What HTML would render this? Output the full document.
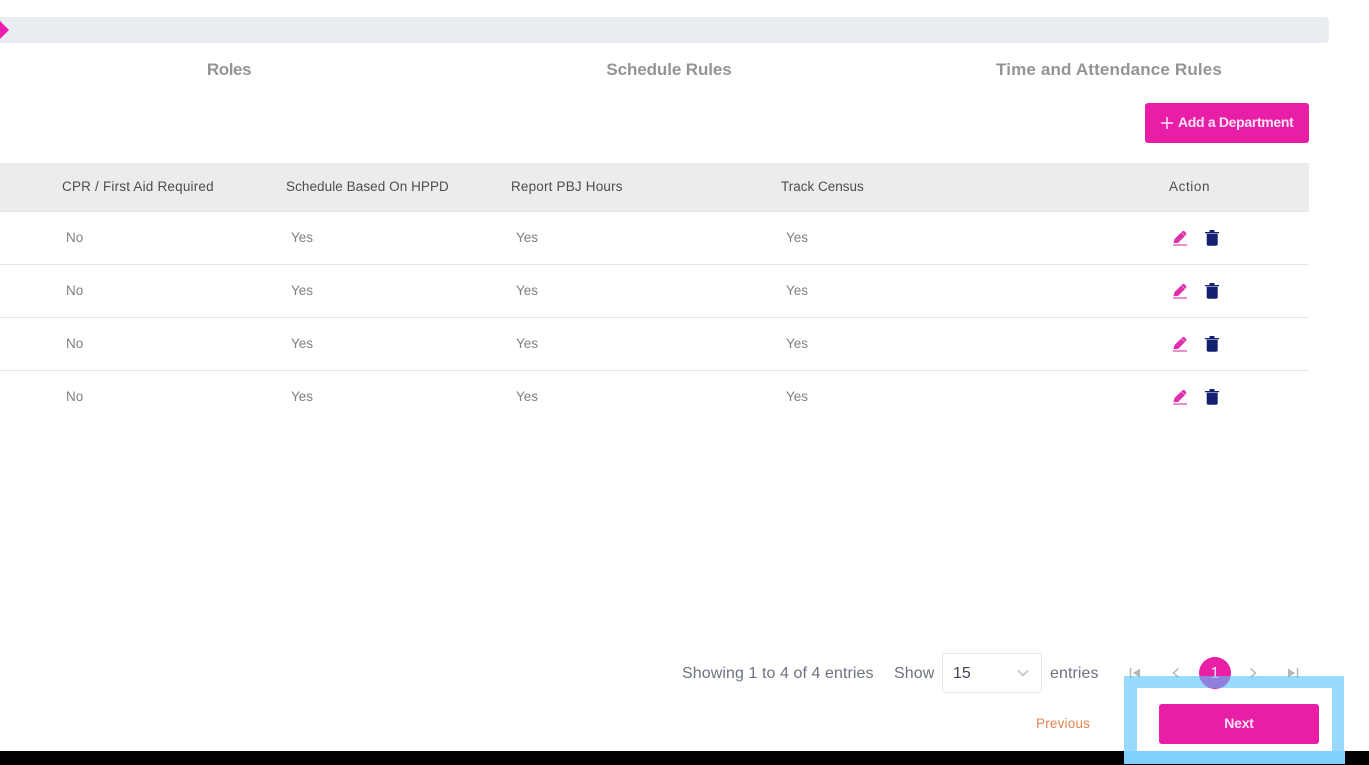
<!DOCTYPE html>
<html><head><meta charset="utf-8">
<style>
html,body{margin:0;padding:0;background:#fff;overflow:hidden}
body{width:1369px;height:765px;position:relative;font-family:"Liberation Sans",sans-serif}
.a{position:absolute;white-space:nowrap}
.tab{top:60px;height:20px;line-height:20px;font-size:17px;font-weight:bold;color:#949494;transform:translateX(-50%)}
.th{top:179px;height:16px;line-height:16px;font-size:13.5px;color:#4d4d4d}
.td{height:16px;line-height:16px;font-size:13.5px;color:#808080}
.line{left:0;width:1309px;height:1px;background:#e6e6e6}
.pg{font-size:16px;color:#6d7280;top:664px;height:20px;line-height:20px;letter-spacing:.08px}
.ov{position:absolute;background:rgba(85,193,255,.6)}
</style></head><body>
<div class="a" style="left:0;top:17px;width:1329px;height:26px;background:#e9edf2;border-radius:0 4px 4px 0"></div>
<div class="a" style="left:0;top:21px;width:0;height:0;border-top:9px solid transparent;border-bottom:9px solid transparent;border-left:9px solid #ee1cb0"></div>
<div class="a tab" style="left:229px;letter-spacing:-.4px">Roles</div>
<div class="a tab" style="left:669px;letter-spacing:-.1px">Schedule Rules</div>
<div class="a tab" style="left:1109px;letter-spacing:.16px">Time and Attendance Rules</div>
<div class="a" style="left:1145px;top:103px;width:164px;height:40px;background:#e91ea6;border-radius:3px"></div>
<svg class="a" style="left:1160px;top:116px" width="14" height="14" viewBox="0 0 14 14"><path d="M7 1V13M1 7H13" stroke="#fbe3f4" stroke-width="1.500"/></svg>
<div class="a" style="left:1178px;top:114px;height:16px;line-height:16px;font-size:14px;font-weight:bold;color:#fbe3f4;letter-spacing:-.32px">Add a Department</div>
<div class="a" style="left:0;top:163px;width:1309px;height:48px;background:#ececec"></div>
<div class="a th" style="left:62px;letter-spacing:.2px">CPR / First Aid Required</div>
<div class="a th" style="left:286px;letter-spacing:.07px">Schedule Based On HPPD</div>
<div class="a th" style="left:511px;letter-spacing:.18px">Report PBJ Hours</div>
<div class="a th" style="left:781px">Track Census</div>
<div class="a th" style="left:1169px;letter-spacing:.6px">Action</div>
<div class="a line" style="top:211px"></div>
<div class="a line" style="top:264px"></div>
<div class="a line" style="top:317px"></div>
<div class="a line" style="top:370px"></div>

<div class="a td" style="left:66px;top:230px">No</div><div class="a td" style="left:291px;top:230px">Yes</div><div class="a td" style="left:516px;top:230px">Yes</div><div class="a td" style="left:786px;top:230px">Yes</div>
<div class="a td" style="left:66px;top:283px">No</div><div class="a td" style="left:291px;top:283px">Yes</div><div class="a td" style="left:516px;top:283px">Yes</div><div class="a td" style="left:786px;top:283px">Yes</div>
<div class="a td" style="left:66px;top:336px">No</div><div class="a td" style="left:291px;top:336px">Yes</div><div class="a td" style="left:516px;top:336px">Yes</div><div class="a td" style="left:786px;top:336px">Yes</div>
<div class="a td" style="left:66px;top:389px">No</div><div class="a td" style="left:291px;top:389px">Yes</div><div class="a td" style="left:516px;top:389px">Yes</div><div class="a td" style="left:786px;top:389px">Yes</div>

<svg width="0" height="0" style="position:absolute"><defs>
<symbol id="ed" viewBox="0 0 16 16"><path d="M1.500 13L2.500 9L10.500 1.200Q11.500 .5 12.500 1.200L14.200 3Q14.800 4 14 5L6 13Z" fill="#e02fab"/><path d="M9.300 2.500L13.200 6" stroke="#f6b6e2" stroke-width=".6" fill="none"/><rect x="1" y="14" width="14" height="2" fill="#eb8fd0"/></symbol>
<symbol id="tr" viewBox="0 0 16 18"><path d="M1 3H15V4.200H1ZM5.500 1H10.500V3H5.500Z" fill="#13206f"/><path d="M2.700 4.800H13.700V15Q13.700 16.800 11.900 16.800H4.500Q2.700 16.800 2.700 15Z" fill="#13206f"/></symbol>
</defs></svg>
<svg class="a" style="left:1172px;top:230px" width="16" height="16"><use href="#ed"/></svg><svg class="a" style="left:1204px;top:229px" width="16" height="18"><use href="#tr"/></svg>
<svg class="a" style="left:1172px;top:283px" width="16" height="16"><use href="#ed"/></svg><svg class="a" style="left:1204px;top:282px" width="16" height="18"><use href="#tr"/></svg>
<svg class="a" style="left:1172px;top:336px" width="16" height="16"><use href="#ed"/></svg><svg class="a" style="left:1204px;top:335px" width="16" height="18"><use href="#tr"/></svg>
<svg class="a" style="left:1172px;top:389px" width="16" height="16"><use href="#ed"/></svg><svg class="a" style="left:1204px;top:388px" width="16" height="18"><use href="#tr"/></svg>

<div class="a pg" style="left:682px">Showing 1 to 4 of 4 entries</div>
<div class="a pg" style="left:894px">Show</div>
<div class="a" style="left:942px;top:653px;width:98px;height:38px;border:1px solid #e8e8e8;border-radius:3px"></div>
<div class="a" style="left:953px;top:664px;height:20px;line-height:20px;font-size:16px;color:#3f4654">15</div>
<svg class="a" style="left:1016px;top:669px" width="14" height="9" viewBox="0 0 14 9"><path d="M2 1.500L7 6.500L12 1.500" fill="none" stroke="#c4c4c4" stroke-width="1.600"/></svg>
<div class="a pg" style="left:1050px">entries</div>

<svg class="a" style="left:1128px;top:666px" width="14" height="14" viewBox="0 0 14 14"><path d="M2.500 2V12" stroke="#b5b5b5" stroke-width="1.500"/><path d="M12 2.500V11.500L5 7Z" fill="#b5b5b5"/></svg>
<svg class="a" style="left:1170px;top:666px" width="12" height="14" viewBox="0 0 12 14"><path d="M8.500 2.500L3.500 7L8.500 11.500" fill="none" stroke="#b5b5b5" stroke-width="1.500"/></svg>
<div class="a" style="left:1199px;top:657px;width:32px;height:32px;border-radius:50%;background:#e91ea6;color:#fbe3f4;font-size:16px;line-height:33px;text-align:center">1</div>
<svg class="a" style="left:1247px;top:666px" width="12" height="14" viewBox="0 0 12 14"><path d="M3.500 2.500L8.500 7L3.500 11.500" fill="none" stroke="#b5b5b5" stroke-width="1.500"/></svg>
<svg class="a" style="left:1286px;top:666px" width="14" height="14" viewBox="0 0 14 14"><path d="M2 2.500V11.500L9 7Z" fill="#b5b5b5"/><path d="M11.500 2V12" stroke="#b5b5b5" stroke-width="1.500"/></svg>

<div class="a" style="left:1036px;top:716px;height:16px;line-height:16px;font-size:13.500px;color:#e2844f;letter-spacing:.2px">Previous</div>
<div class="a" style="left:1159px;top:704px;width:160px;height:40px;background:#e91ea6;border-radius:3px;color:#fbe3f4;font-size:14px;font-weight:bold;line-height:39px;text-align:center;letter-spacing:-.2px">Next</div>

<div class="a" style="left:0;top:751px;width:1369px;height:14px;background:#000"></div>
<div class="ov" style="left:1124px;top:676px;width:220px;height:12px"></div>
<div class="ov" style="left:1124px;top:688px;width:13px;height:63px"></div>
<div class="ov" style="left:1332px;top:688px;width:12px;height:63px"></div>
<div class="a" style="left:1124px;top:751px;width:221px;height:13px;background:#80d0ff"></div>
</body></html>
